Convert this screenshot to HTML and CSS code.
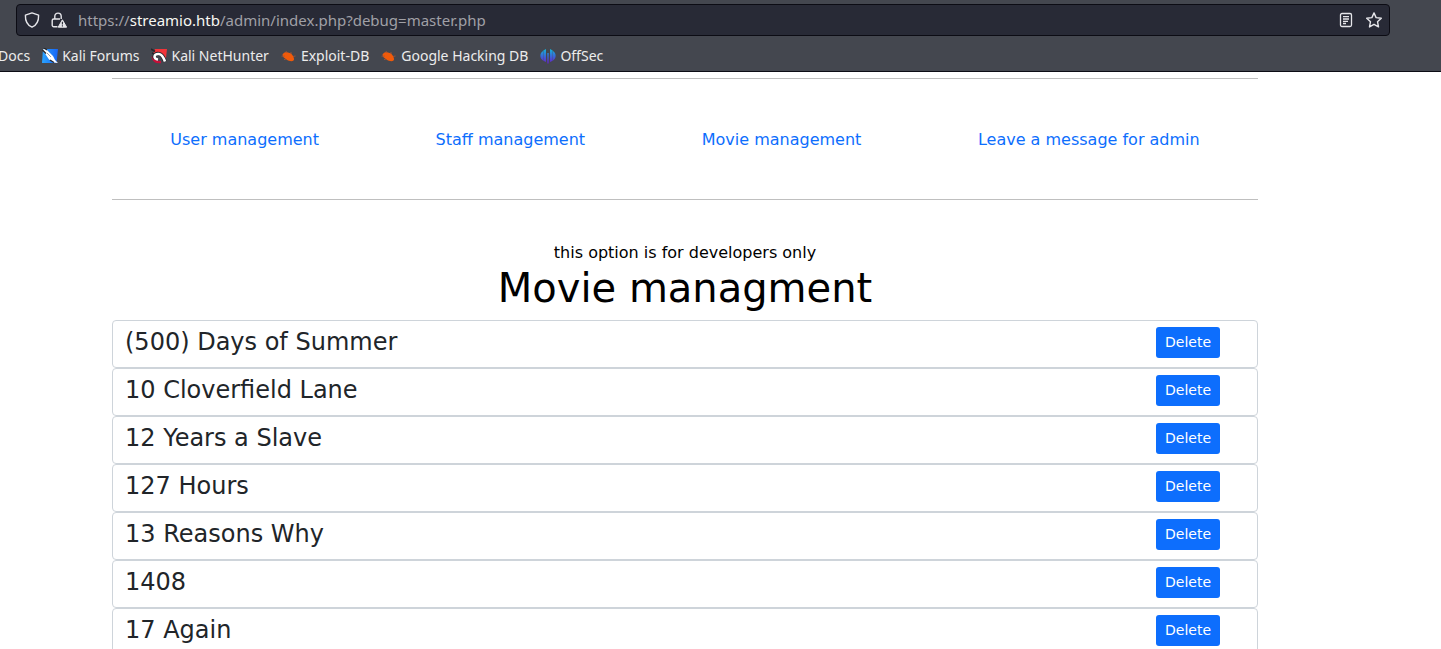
FILE: index.html
```
<!DOCTYPE html>
<html lang="en">
<head>
<meta charset="utf-8">
<title>Admin panel</title>
<link rel="stylesheet" href="styles.css">
</head>
<body>
<header class="browser">
  <div class="urlbar">
    <svg class="icon" viewBox="0 0 16 16" fill="none" stroke="#e6e6ea" stroke-width="1.4" stroke-linejoin="round"><path d="M8 .9 14.600 3.200C14.800 9 12.500 13.200 8 15.200 3.500 13.200 1.200 9 1.400 3.200Z"/></svg>
    <svg class="icon lock" viewBox="0 0 16 16"><path d="M3.800 7V4.300a3.200 3.200 0 0 1 6.400 0V7M6.500 14.700H2.700a1.500 1.500 0 0 1-1.500-1.500V8.500A1.500 1.500 0 0 1 2.700 7H9" fill="none" stroke="#e6e6ea" stroke-width="1.4"/><path d="M11.400 7.800 15.600 15.200H7.200Z" fill="#e6e6ea" stroke="#e6e6ea" stroke-linejoin="round" stroke-width="1"/><path d="M11.400 9.800v2.600M11.400 13.300v1.200" stroke="#282a36" stroke-width="1.100"/></svg>
    <span class="url">https://<b class="host">streamio.htb</b>/admin/index.php?debug=master.php</span>
    <button class="tool" type="button" aria-label="Reader view"><svg class="icon" viewBox="0 0 16 16" fill="none" stroke="#e6e6ea" stroke-width="1.3"><rect x="2.500" y="1.500" width="11" height="13" rx="1.500"/><path d="M5 4.700h6M5 7h6M5 9.300h5M5 11.500h3"/></svg></button>
    <button class="tool" type="button" aria-label="Bookmark this page"><svg class="icon" viewBox="0 0 16 16" fill="none" stroke="#e6e6ea" stroke-width="1.400" stroke-linejoin="round"><path d="m8 .9 2.100 4.700 5.200.6-3.800 3.500 1 5.200L8 12.300l-4.500 2.600 1-5.200L.7 6.200l5.200-.6Z"/></svg></button>
  </div>
  <nav class="bookmarks" aria-label="Bookmarks">
    <a class="bookmark" href="#">Docs</a>
    <a class="bookmark" href="#"><svg class="icon" viewBox="0 0 16 16"><defs><linearGradient id="forum" x2="1" y2="0"><stop stop-color="#2aa4ff"/><stop offset="1" stop-color="#1764f5"/></linearGradient></defs><path d="M1 1h15l-1.500 14H0Z" fill="url(#forum)"/><path d="M0 1.500 4 1l7 7 2 4 3 3-4-.5-5-3-4-6Z" fill="#fff"/><path d="m0 1.500 4 4M2 0l3 2M8 12l4 2.500" stroke="#25262c" stroke-width="1.300"/><path d="m5 5 4 4" stroke="#9aa0aa"/></svg>Kali Forums</a>
    <a class="bookmark" href="#"><svg class="icon" viewBox="0 0 16 16"><path d="M4 1h12l-1.300 12-4-8L2 6Z" fill="#f13439"/><path d="M1.500 8.500C2.500 13 6 14.500 10 14" fill="none" stroke="#c60f38" stroke-width="2.400"/><path d="m0 1 4 2.500M1 5l2 1" stroke="#25262c" stroke-width="1.500"/><path d="M4 10.500C2 7 6 4.500 9.500 6.500c2.500 1.500 3.500 4 4.500 7" fill="none" stroke="#25262c" stroke-width="4"/><path d="M7 11.500C2 11 2.500 5.500 8 6c3 .3 4.500 3.500 6 7.500" fill="none" stroke="#fff" stroke-width="2.600"/></svg>Kali NetHunter</a>
    <a class="bookmark" href="#"><svg class="icon" viewBox="0 0 16 16"><g id="bug"><path d="M1.500 6.500C3 4 5 4 7 4.500c2.500.3 4 1.500 5 3.500s1.500 3.500.5 4.500c-1.500 1.500-5 .5-7-1C3.500 10 1.500 9 1.500 6.500Z" fill="#f05a0a"/><path d="M4 8 .5 8.200M5 11l-2 .7M6 5 5 3M10 6V4M12 8.500l2.500-.5" stroke="#a85535" stroke-width=".8"/></g></svg>Exploit-DB</a>
    <a class="bookmark" href="#"><svg class="icon" viewBox="0 0 16 16"><use href="#bug"/></svg>Google Hacking DB</a>
    <a class="bookmark" href="#"><svg class="icon" viewBox="0 0 16 16"><defs><linearGradient id="off" gradientUnits="userSpaceOnUse" x1="0" y1="1" x2="0" y2="15"><stop stop-color="#12b5d8"/><stop offset=".5" stop-color="#386bd8"/><stop offset="1" stop-color="#6422c8"/></linearGradient></defs><path d="M3 3v9.500C-.5 10.500-.5 5 3 3ZM3.300 2.500 6 1v13l-2.700-1.300ZM7.300 5h1.400v10.500H7.300ZM10 1l2.700 1.500v10.200L10 14ZM13 3c3.500 2 3.500 7.500 0 9.500Z" fill="url(#off)"/></svg>OffSec</a>
  </nav>
</header>
<main class="page">
  <nav class="menu">
    <a class="menu-link" href="#">User management</a>
    <a class="menu-link" href="#">Staff management</a>
    <a class="menu-link" href="#">Movie management</a>
    <a class="menu-link" href="#">Leave a message for admin</a>
  </nav>
  <section class="movies">
    <p class="note">this option is for developers only</p>
    <h1 class="heading">Movie managment</h1>
    <ul class="list">
      <li class="row"><h2 class="title">(500) Days of Summer</h2><button class="delete" type="button">Delete</button></li>
      <li class="row"><h2 class="title">10 Cloverfield Lane</h2><button class="delete" type="button">Delete</button></li>
      <li class="row"><h2 class="title">12 Years a Slave</h2><button class="delete" type="button">Delete</button></li>
      <li class="row"><h2 class="title">127 Hours</h2><button class="delete" type="button">Delete</button></li>
      <li class="row"><h2 class="title">13 Reasons Why</h2><button class="delete" type="button">Delete</button></li>
      <li class="row"><h2 class="title">1408</h2><button class="delete" type="button">Delete</button></li>
      <li class="row"><h2 class="title">17 Again</h2><button class="delete" type="button">Delete</button></li>
    </ul>
  </section>
</main>
</body>
</html>
```
FILE: styles.css
```
* { box-sizing: border-box; }
html { height: 100%; overflow: hidden; }
body {
  height: 100%;
  margin: 0;
  display: flex;
  flex-direction: column;
  overflow: hidden;
  background: #fff;
  color: #000;
  font: 16px/24px "DejaVu Sans", sans-serif;
}
.browser {
  flex: none;
  padding-top: 4px;
  background: #44474f;
  border-bottom: 1px solid #0c0c14;
  color: #ececec;
  font: 15px/20px "Noto Sans", sans-serif;
}
.urlbar {
  display: flex;
  align-items: center;
  height: 32px;
  margin: 0 51px 0 16px;
  padding: 0 7px;
  background: #282a36;
  border: 1px solid #0c0c14;
  border-radius: 4px;
}
.icon { display: block; flex: none; width: 16px; height: 16px; }
.lock { margin-left: 11px; }
.url { flex: 1; margin-left: 11px; color: #a0a0a6; }
.host { color: #f8f8f2; font-weight: 400; }
.tool { margin-left: 12px; padding: 0; background: none; border: 0; }
.bookmarks {
  display: flex;
  gap: 12px;
  height: 35px;
  padding-top: 10px;
  margin-left: -2px;
  font-size: 14px;
}
.bookmark {
  display: flex;
  align-items: center;
  gap: 4px;
  height: 20px;
  color: inherit;
  text-decoration: none;
  white-space: nowrap;
}
.page {
  flex: 1;
  min-height: 0;
  margin: 0 183px 0 112px;
  padding-top: 6px;
}
.menu {
  display: flex;
  justify-content: space-around;
  padding: 49px 0 47px;
  border: solid #bfbfbf;
  border-width: 1px 0;
}
.menu-link { color: #0d6efd; text-decoration: none; }
.movies { padding-top: 41px; text-align: center; }
.note { margin: 0; }
.heading { margin: 0 0 8px; font-size: 40px; font-weight: 400; line-height: 47px; }
.list { margin: 0; padding: 0; list-style: none; }
.row {
  display: flex;
  justify-content: space-between;
  align-items: flex-start;
  height: 48px;
  padding: 6px 37px 0 12px;
  border: 1px solid #ced4da;
  border-radius: 4px;
  color: #212529;
}
.title { margin: 0; font-size: 24px; font-weight: 400; line-height: 30px; }
.delete {
  padding: 5px 9px;
  background: #0d6efd;
  border: 0;
  border-radius: 3px;
  color: #fff;
  font: 14px/21px "DejaVu Sans", sans-serif;
}
```
